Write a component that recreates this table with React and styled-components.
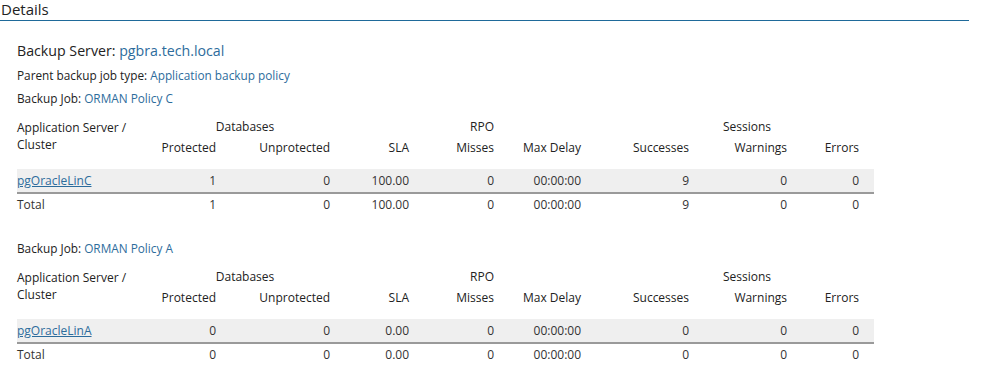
import React from "react";
import styled, { createGlobalStyle } from "styled-components";

const GlobalStyle = createGlobalStyle`
  body {
    margin: 0;
    background: #ffffff;
    font-family: "Segoe UI", "Open Sans", sans-serif;
    color: #222222;
  }
`;

// column widths, right edge of each text lines up with the column edge
const COLS = [133, 66, 114, 79, 85, 87, 108, 98, 87];

const JOBS = [
  {
    name: "ORMAN Policy C",
    server: "pgOracleLinC",
    row: ["1", "0", "100.00", "0", "00:00:00", "9", "0", "0"],
    total: ["1", "0", "100.00", "0", "00:00:00", "9", "0", "0"],
  },
  {
    name: "ORMAN Policy A",
    server: "pgOracleLinA",
    row: ["0", "0", "0.00", "0", "00:00:00", "0", "0", "0"],
    total: ["0", "0", "0.00", "0", "00:00:00", "0", "0", "0"],
  },
];

const App = () => {
  return (
    <>
      <GlobalStyle />
      <Page>
        <SectionTitle>Details</SectionTitle>
        <Content>
          <ServerHeading>
            Backup Server: <Value>pgbra.tech.local</Value>
          </ServerHeading>
          <InfoLine>
            Parent backup job type: <Value>Application backup policy</Value>
          </InfoLine>
          {JOBS.map(job => (
            <JobBlock key={job.name}>
              <InfoLine>
                Backup Job: <Value>{job.name}</Value>
              </InfoLine>
              <Table>
                <colgroup>
                  {COLS.map((w, i) => (
                    <Col key={i} $w={w} />
                  ))}
                </colgroup>
                <thead>
                  <tr>
                    <NameHead rowSpan={2}>
                      Application Server /<br />
                      Cluster
                    </NameHead>
                    <GroupHead colSpan={2} $shift={10}>
                      Databases
                    </GroupHead>
                    <GroupHead />
                    <GroupHead $right>RPO</GroupHead>
                    <GroupHead />
                    <GroupHead colSpan={3} $shift={54}>
                      Sessions
                    </GroupHead>
                  </tr>
                  <tr>
                    <ColHead>Protected</ColHead>
                    <ColHead>Unprotected</ColHead>
                    <ColHead>SLA</ColHead>
                    <ColHead>Misses</ColHead>
                    <ColHead>Max Delay</ColHead>
                    <ColHead>Successes</ColHead>
                    <ColHead>Warnings</ColHead>
                    <ColHead>Errors</ColHead>
                  </tr>
                </thead>
                <tbody>
                  <DataRow>
                    <Cell>
                      <ServerLink href="#">{job.server}</ServerLink>
                    </Cell>
                    {job.row.map((v, i) => (
                      <Cell key={i} $num>
                        {v}
                      </Cell>
                    ))}
                  </DataRow>
                  <TotalRow>
                    <Cell>Total</Cell>
                    {job.total.map((v, i) => (
                      <Cell key={i} $num>
                        {v}
                      </Cell>
                    ))}
                  </TotalRow>
                </tbody>
              </Table>
            </JobBlock>
          ))}
        </Content>
      </Page>
    </>
  );
};

// STYLED COMPONENTS
const Page = styled.div`
  width: 984px;
  height: 385px;
  overflow: hidden;
`;

const SectionTitle = styled.h2`
  margin: 0;
  width: 968px;
  padding: 0 0 2px 1px;
  line-height: 18px;
  font-size: 15px;
  font-weight: 400;
  color: #222222;
  border-bottom: 1px solid #1f6a9a;
`;

const Content = styled.div`
  padding: 18px 0 0 17px;
`;

const ServerHeading = styled.div`
  font-size: 14.2px;
  line-height: 24px;
  margin-bottom: 1px;
`;

const Value = styled.span`
  color: #2d6c9c;
`;

const InfoLine = styled.div`
  font-size: 11.8px;
  line-height: 23px;
`;

const JobBlock = styled.div`
  margin-bottom: 22px;
`;

const Table = styled.table`
  margin-top: 6px;
  width: 857px;
  table-layout: fixed;
  border-collapse: collapse;
  font-size: 12px;
  td:last-child,
  th:last-child {
    padding-right: 15px;
  }
`;

const Col = styled.col`
  width: ${p => p.$w}px;
`;

const NameHead = styled.th`
  padding: 3px 0 0;
  text-align: left;
  vertical-align: top;
  font-weight: 400;
  line-height: 17px;
`;

const GroupHead = styled.th`
  padding: 0 0 0 ${p => p.$shift || 0}px;
  height: 21px;
  line-height: 21px;
  font-weight: 400;
  text-align: ${p => (p.$right ? "right" : "center")};
`;

const ColHead = styled.th`
  padding: 0 0 11px;
  line-height: 21px;
  font-weight: 400;
  text-align: right;
  vertical-align: top;
`;

const DataRow = styled.tr`
  background: #efefef;
  border-bottom: 2px solid #9a9a9a;
  td {
    height: 23px;
  }
`;

const TotalRow = styled.tr`
  td {
    height: 21px;
  }
`;

const Cell = styled.td`
  padding: 0;
  line-height: 21px;
  color: #333333;
  text-align: ${p => (p.$num ? "right" : "left")};
`;

const ServerLink = styled.a`
  color: #2d6c9c;
  text-decoration: underline;
`;

export default App;
